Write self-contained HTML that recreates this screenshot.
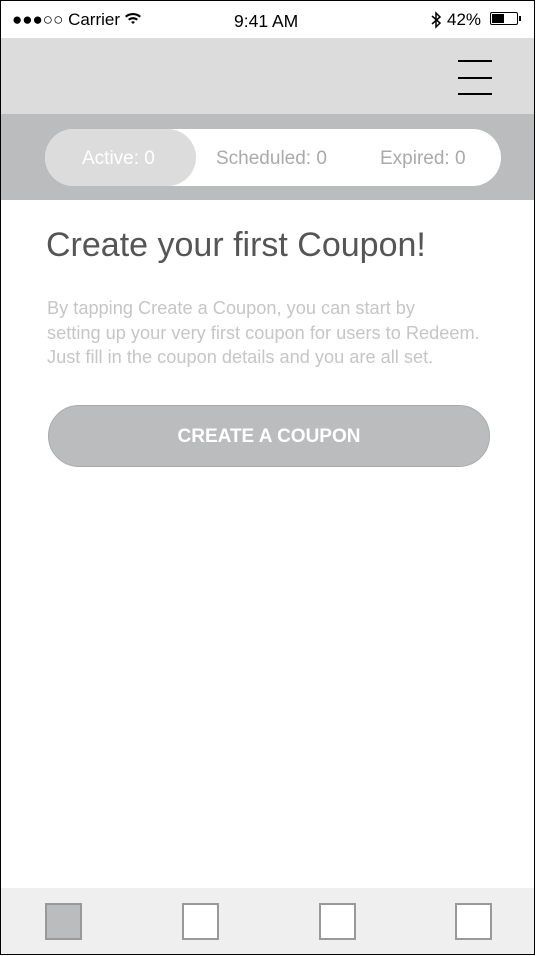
<!DOCTYPE html>
<html><head><style>
body{margin:0;width:537px;height:956px;position:relative;background:#fff;font-family:"Liberation Sans",sans-serif;overflow:hidden}
.frame{position:absolute;left:0;top:0;width:535px;height:955px;border:1px solid #000;box-sizing:border-box}
.a{position:absolute;white-space:nowrap}
</style></head><body>
<div class="a" style="left:0;top:38px;width:535px;height:76px;background:#dcdcdc"></div>
<div class="a" style="left:0;top:114px;width:535px;height:86px;background:#bbbcbe"></div>
<div class="a" style="left:0;top:888px;width:535px;height:66px;background:#efefef"></div>
<div class="frame"></div>
<div class="a" style="left:12px;top:10px;font-size:17px;color:#000">●●●○○ Carrier</div>
<svg class="a" style="left:124px;top:11px" width="18" height="14" viewBox="0 0 18 14"><path d="M1 5 A12 12 0 0 1 17 5 L15.5 6.5 A10 10 0 0 0 2.5 6.5Z M4 8 A7.5 7.5 0 0 1 14 8 L12.5 9.5 A5.5 5.5 0 0 0 5.5 9.5Z M7 11 A3 3 0 0 1 11 11 L9 13Z" fill="#000"/></svg>
<div class="a" style="left:234px;top:11px;font-size:17.5px;color:#000">9:41 AM</div>
<svg class="a" style="left:430px;top:11px" width="12" height="18" viewBox="0 0 12 18"><path d="M2 5 L10 12 L6 16 L6 2 L10 6 L2 13" fill="none" stroke="#000" stroke-width="1.5"/></svg>
<div class="a" style="left:447px;top:10px;font-size:17px;color:#000">42%</div>
<div class="a" style="left:490px;top:12px;width:28px;height:13px;border:1px solid #000;border-radius:2px;box-sizing:border-box;padding:1px"><div style="width:12px;height:9px;background:#000"></div></div>
<div class="a" style="left:519px;top:16px;width:2px;height:5px;background:#000"></div>
<div class="a" style="left:458px;top:60px;width:34px;height:2px;background:#000"></div>
<div class="a" style="left:458px;top:77px;width:34px;height:2px;background:#000"></div>
<div class="a" style="left:458px;top:93px;width:34px;height:2px;background:#000"></div>
<div class="a" style="left:45px;top:129px;width:456px;height:57px;background:#fff;border-radius:29px"></div>
<div class="a" style="left:45px;top:129px;width:151px;height:57px;background:#dcdcdc;border-radius:29px"></div>
<div class="a" style="left:82px;top:148px;font-size:19px;color:#fff">Active: 0</div>
<div class="a" style="left:216px;top:148px;font-size:19px;color:#aaa">Scheduled: 0</div>
<div class="a" style="left:380px;top:148px;font-size:19px;color:#aaa">Expired: 0</div>
<div class="a" style="left:46px;top:226px;font-size:34px;color:#555">Create your first Coupon!</div>
<div class="a" style="left:47px;top:296px;font-size:18.2px;line-height:24.5px;color:#c6c6c6">By tapping Create a Coupon, you can start by<br>setting up your very first coupon for users to Redeem.<br>Just fill in the coupon details and you are all set.</div>
<div class="a" style="left:48px;top:405px;width:442px;height:62px;box-sizing:border-box;background:#bbbcbe;border:1px solid #aaa;border-radius:31px;color:#fff;font-weight:bold;font-size:19px;text-align:center;line-height:62px">CREATE A COUPON</div>
<div class="a" style="left:45px;top:903px;width:37px;height:37px;box-sizing:border-box;background:#bbbcbe;border:2px solid #999"></div>
<div class="a" style="left:182px;top:903px;width:37px;height:37px;box-sizing:border-box;background:#fff;border:2px solid #999"></div>
<div class="a" style="left:319px;top:903px;width:37px;height:37px;box-sizing:border-box;background:#fff;border:2px solid #999"></div>
<div class="a" style="left:455px;top:903px;width:37px;height:37px;box-sizing:border-box;background:#fff;border:2px solid #999"></div>
</body></html>
